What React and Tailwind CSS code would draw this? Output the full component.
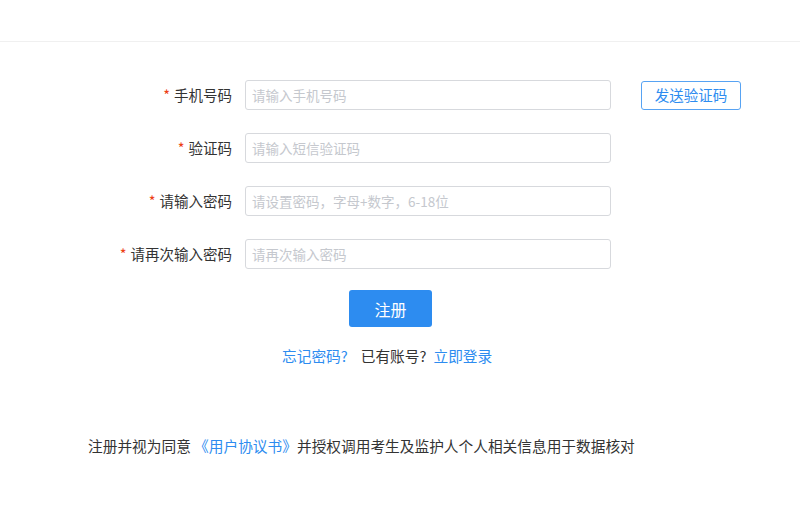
import React, { useState } from "react";

const font = { fontFamily: '"Noto Sans CJK SC", "Noto Sans", sans-serif' };

const fields = [
  { name: "phone", label: "手机号码", placeholder: "请输入手机号码", type: "text" },
  { name: "code", label: "验证码", placeholder: "请输入短信验证码", type: "text" },
  { name: "password", label: "请输入密码", placeholder: "请设置密码，字母+数字，6-18位", type: "password" },
  { name: "confirm", label: "请再次输入密码", placeholder: "请再次输入密码", type: "password" },
];

function FormRow({ field, value, onChange, extra }) {
  return (
    <div className="flex items-center h-[30px]">
      <label className="w-[245px] pr-[13px] text-right text-[14.5px] text-[#333]">
        <span className="text-[#ed4014] mr-[4px]">*</span>
        {field.label}
      </label>
      <input
        type={field.type}
        value={value}
        onChange={(e) => onChange(field.name, e.target.value)}
        placeholder={field.placeholder}
        className="w-[366px] h-[30px] border border-[#d7d9dd] rounded-[3px] pl-[6px] text-[13.5px] text-[#515a6e] placeholder:text-[#c5c8ce] outline-none"
      />
      {extra}
    </div>
  );
}

export default function App() {
  const [form, setForm] = useState({ phone: "", code: "", password: "", confirm: "" });

  const handleChange = (name, value) => {
    setForm({ ...form, [name]: value });
  };

  return (
    <div className="w-[800px] h-[522px] bg-white" style={font}>
      <div className="h-[42px] border-b border-[#f0f0f0]"></div>

      <div className="pt-[38px] flex flex-col gap-[23px]">
        {fields.map((field, index) => (
          <FormRow
            key={field.name}
            field={field}
            value={form[field.name]}
            onChange={handleChange}
            extra={
              index === 0 ? (
                <button className="ml-[30px] w-[100px] h-[29px] border border-[#57a3f3] rounded-[3px] text-[14.5px] text-[#2d8cf0] bg-white">
                  发送验证码
                </button>
              ) : null
            }
          />
        ))}
      </div>

      <div className="pl-[349px] pt-[21px]">
        <button className="w-[83px] h-[37px] rounded-[3px] bg-[#2d8cf0] text-white text-[16px]">
          注册
        </button>
      </div>

      <div className="pl-[282px] pt-[19px] flex items-center h-[40px] text-[14.7px]">
        <a href="#" className="text-[#2d8cf0]">忘记密码?</a>
        <span className="ml-[13px] text-[#333]">已有账号?</span>
        <a href="#" className="ml-[7px] text-[#2d8cf0]">立即登录</a>
      </div>

      <div className="pl-[88px] pt-[68px] text-[14.7px] text-[#333]">
        注册并视为同意 <a href="#" className="text-[#2d8cf0]">《用户协议书》</a>并授权调用考生及监护人个人相关信息用于数据核对
      </div>
    </div>
  );
}
